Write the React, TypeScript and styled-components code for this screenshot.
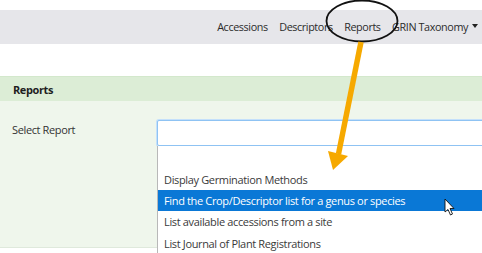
import React from "react";
import styled, { createGlobalStyle } from "styled-components";

const Global = createGlobalStyle`
  html, body { margin: 0; padding: 0; background: #ffffff; }
  body { font-family: "Open Sans", "Noto Sans", sans-serif; color: #333; overflow: hidden; }
  * { box-sizing: border-box; }
`;

const Page = styled.div`
  position: relative;
  width: 482px;
  height: 253px;
  padding-top: 10px;
  overflow: hidden;
`;

const NavBar = styled.nav`
  height: 34px;
  background: #e6e6ea;
  display: flex;
  align-items: center;
  justify-content: flex-end;
  gap: 11.5px;
  padding-right: 4px;
  padding-bottom: 2px;
`;

const NavLink = styled.span`
  font-size: 10.8px;
  letter-spacing: -0.4px;
  color: #2b2b2b;
  white-space: nowrap;
  display: inline-flex;
  align-items: center;
  gap: 4px;
`;

const Caret = styled.span`
  width: 0;
  height: 0;
  border-left: 3px solid transparent;
  border-right: 3px solid transparent;
  border-top: 4px solid #222;
`;

const Spacer = styled.div`
  height: 32px;
`;

const Panel = styled.section`
  border-top: 1px solid #d3e8cc;
  border-bottom: 1px solid #dfe9dc;
  background: #eff6ec;
`;

const PanelHeader = styled.div`
  height: 24px;
  background: #dcedd6;
  display: flex;
  align-items: center;
  padding-left: 13px;
  font-size: 11px;
  letter-spacing: -0.4px;
  font-weight: 700;
  color: #1e1e1e;
`;

const PanelBody = styled.div`
  height: 146px;
  padding-top: 19px;
`;

const FormRow = styled.div`
  display: grid;
  grid-template-columns: 157px 1fr;
  align-items: start;
`;

const Label = styled.label`
  padding: 2px 0 0 12px;
  font-size: 11px;
  line-height: 15px;
  letter-spacing: -0.37px;
  color: #333;
`;

const SelectWrap = styled.div`
  position: relative;
  height: 26px;
`;

const SelectBox = styled.div`
  height: 26px;
  width: 340px;
  background: #fff;
  border: 1px solid #8fc3f3;
  border-radius: 2px;
  box-shadow: 0 0 0 1px #c4e0fb;
`;

const DropList = styled.ul`
  position: absolute;
  top: 26px;
  left: 0;
  width: 340px;
  margin: 0;
  padding: 1px 0 0;
  list-style: none;
  background: #fff;
  border-left: 1px solid #b8b8b8;
  z-index: 2;
`;

const Option = styled.li<{ $active?: boolean }>`
  height: 21.4px;
  display: flex;
  align-items: center;
  padding-left: 6px;
  font-size: 11px;
  letter-spacing: -0.35px;
  white-space: nowrap;
  color: ${(p) => (p.$active ? "#ffffff" : "#3a3a3a")};
  background: ${(p) => (p.$active ? "#0a78d6" : "transparent")};
`;

const Overlay = styled.svg`
  position: absolute;
  left: 0;
  top: 0;
  pointer-events: none;
  z-index: 5;
`;

export default function App() {
  return (
    <>
      <Global />
      <Page>
        <NavBar>
          <NavLink>Accessions</NavLink>
          <NavLink>Descriptors</NavLink>
          <NavLink>Reports</NavLink>
          <NavLink>
            GRIN Taxonomy <Caret />
          </NavLink>
        </NavBar>
        <Spacer />
        <Panel>
          <PanelHeader>Reports</PanelHeader>
          <PanelBody>
            <FormRow>
              <Label>Select Report</Label>
              <SelectWrap>
                <SelectBox />
                <DropList>
                  <Option>&nbsp;</Option>
                  <Option>Display Germination Methods</Option>
                  <Option $active>Find the Crop/Descriptor list for a genus or species</Option>
                  <Option>List available accessions from a site</Option>
                  <Option>List Journal of Plant Registrations</Option>
                </DropList>
              </SelectWrap>
            </FormRow>
          </PanelBody>
        </Panel>
        <Overlay width="482" height="253" viewBox="0 0 482 253">
          <ellipse cx="362" cy="21" rx="35.5" ry="20.5" fill="none" stroke="#111" strokeWidth="1.8" />
          <line x1="361" y1="42" x2="338.5" y2="154" stroke="#f6a900" strokeWidth="5.5" />
          <polygon points="328,151 348,156 333,170" fill="#f6a900" />
          <path
            d="M445 199 L445 212 L448 209.5 L450.5 215 L452.5 214 L450 208.5 L454 208.5 Z"
            fill="#fff"
            stroke="#111"
            strokeWidth="0.9"
            strokeLinejoin="round"
          />
        </Overlay>
      </Page>
    </>
  );
}
